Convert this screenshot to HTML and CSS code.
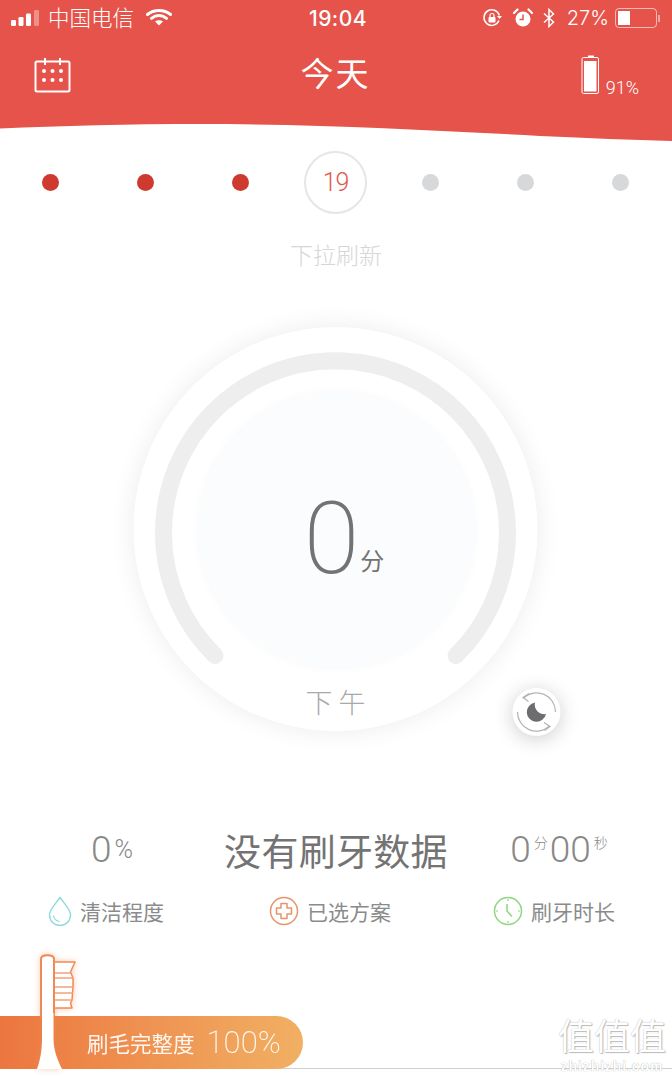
FILE: index.html
```html
<!DOCTYPE html>
<html lang="zh">
<head>
<meta charset="utf-8">
<title>今天</title>
<link rel="stylesheet" href="styles.css">
</head>
<body>
<div class="page">
  <header class="header">
    <svg class="wave" viewBox="0 0 672 142" preserveAspectRatio="none"><path d="M0 128.500C60 126 130 124 200 124C320 124 430 130 540 136C590 138 630 140 672 141V0H0Z" fill="#e5534a"/></svg>
    <div class="status">
      <div class="status-left">
        <svg class="signal" viewBox="0 0 30 16"><rect x="0" y="10" width="5" height="6" rx="1.2" fill="#fff"/><rect x="7.500" y="7" width="5" height="9" rx="1.2" fill="#fff"/><rect x="15" y="3.500" width="5" height="12.500" rx="1.2" fill="#fff"/><rect x="23" y="0" width="5" height="16" rx="1.2" fill="#fff" opacity=".35"/></svg>
        <span class="carrier">中国电信</span>
        <svg class="wifi" viewBox="0 0 26 18"><path d="M1.500 6.500C8 1 18 1 24.500 6.500M5.500 10.300C10 6.700 16 6.700 20.500 10.300" fill="none" stroke="#fff" stroke-width="3" stroke-linecap="round"/><path d="M9 13.500C11.500 11.700 14.500 11.700 17 13.500L13 17.500Z" fill="#fff"/></svg>
      </div>
      <div class="time">19:04</div>
      <div class="status-right">
        <svg class="lock" viewBox="0 0 20 20"><path d="M17 12.500A7.800 7.800 0 1 1 17.300 7.500" fill="none" stroke="#fff" stroke-width="1.500"/><path d="M15 8h5l-2.500 3z" fill="#fff"/><rect x="6.500" y="9" width="7" height="5.500" rx="1" fill="#fff"/><path d="M8 9V7.500a2 2 0 0 1 4 0V9" fill="none" stroke="#fff" stroke-width="1.200"/></svg>
        <svg class="alarm" viewBox="0 0 20 20"><circle cx="10" cy="11" r="7.500" fill="#fff"/><path d="M10 6.500V11.500H6.500" fill="none" stroke="#e5534a" stroke-width="1.500"/><path d="M1 5L4.500 1.500M19 5L15.500 1.500" stroke="#fff" stroke-width="2.200" stroke-linecap="round"/></svg>
        <svg class="bt" viewBox="0 0 12 20"><path d="M1 5.500L10.500 14L6 18.500V1.500L10.500 6L1 14.500" fill="none" stroke="#fff" stroke-width="1.500"/></svg>
        <span class="pct">27%</span>
        <div class="phone-batt"><div class="phone-batt-fill"></div></div><div class="phone-batt-tip"></div>
      </div>
    </div>
    <div class="nav">
      <svg class="cal" viewBox="0 0 38 36"><rect x="1.500" y="4.500" width="34" height="30" rx="1.500" fill="none" stroke="#fff" stroke-width="2"/><path d="M11 1V8M26 1V8" stroke="#fff" stroke-width="2"/><g fill="#fff"><circle cx="10" cy="14" r="2"/><circle cx="18.500" cy="14" r="2"/><circle cx="27" cy="14" r="2"/><circle cx="10" cy="23" r="2"/><circle cx="18.500" cy="23" r="2"/><circle cx="27" cy="23" r="2"/></g></svg>
      <h1 class="title">今天</h1>
      <div class="device">
        <svg class="device-icon" viewBox="0 0 20 40"><path d="M7 1.500h6" stroke="#fff" stroke-width="2"/><rect x="1" y="2.500" width="16.500" height="36" rx="1.500" fill="none" stroke="#fff" stroke-width="1"/><rect x="3" y="6" width="12.500" height="30.500" fill="#fff"/></svg>
        <span class="device-pct">91%</span>
      </div>
    </div>
  </header>

  <div class="dates">
    <span class="dot on"></span>
    <span class="dot on"></span>
    <span class="dot on"></span>
    <span class="today">19</span>
    <span class="dot"></span>
    <span class="dot"></span>
    <span class="dot"></span>
  </div>

  <div class="refresh">下拉刷新</div>

  <section class="dial">
    <svg class="ring" viewBox="0 0 404 404"><path d="M81.500 328.500A172 172 0 1 1 322.500 328.500" fill="none" stroke="#eeeeee" stroke-width="17" stroke-linecap="round"/></svg>
    <div class="core">
      <span class="score">0</span><span class="score-unit">分</span>
    </div>
    <div class="period">下 午</div>
    <div class="mode">
      <svg viewBox="0 0 48 48"><path d="M43 24A19 19 0 0 0 11 10M5 24A19 19 0 0 0 37 38" fill="none" stroke="#b5b5b5" stroke-width="1.300"/><path d="M16.500 5.500L10.500 9.500L16 13.500M31.500 34.500L37.500 38.500L32 42.500" fill="none" stroke="#b5b5b5" stroke-width="1.300"/><path d="M22.500 14.500A9.700 9.700 0 1 0 33.500 26A9.500 9.500 0 0 1 22.500 14.500Z" fill="#6d6d6f"/></svg>
    </div>
  </section>

  <section class="stats">
    <div class="stat-value"><span class="num">0</span><span class="pc">%</span></div>
    <div class="headline">没有刷牙数据</div>
    <div class="stat-value"><span class="num">0</span><sup class="sm">分</sup><span class="num">00</span><sup class="sm">秒</sup></div>
  </section>

  <section class="legend">
    <div class="legend-item">
      <svg class="legend-icon drop" viewBox="0 0 24 30"><path d="M12 1.500C7 8.500 1.500 13.500 1.500 19A10.500 10.500 0 0 0 22.500 19C22.500 13.500 17 8.500 12 1.500Z" fill="none" stroke="#8fd8dc" stroke-width="1.400"/><path d="M5.500 19.500C6 23 8.500 25 11.500 25.500" fill="none" stroke="#8fd8dc" stroke-width="1.200"/></svg>
      <span>清洁程度</span>
    </div>
    <div class="legend-item">
      <svg class="legend-icon" viewBox="0 0 30 30"><circle cx="15" cy="15" r="13.500" fill="none" stroke="#e8946a" stroke-width="1.500"/><path d="M12 7.500H18V12H22.500V18H18V22.500H12V18H7.500V12H12Z" fill="none" stroke="#e8946a" stroke-width="1.500" stroke-linejoin="round"/></svg>
      <span>已选方案</span>
    </div>
    <div class="legend-item">
      <svg class="legend-icon" viewBox="0 0 30 30"><circle cx="15" cy="15" r="13.500" fill="none" stroke="#8ed67f" stroke-width="1.500"/><path d="M14 8V15L19 20.500" fill="none" stroke="#8ed67f" stroke-width="1.500"/><path d="M15 3V5M15 25V27M3 15H5M25 15H27" stroke="#8ed67f" stroke-width="1.200"/></svg>
      <span>刷牙时长</span>
    </div>
  </section>

  <footer class="footer">
    <div class="wear">
      <span class="wear-label">刷毛完整度</span>
      <span class="wear-value">100%</span>
    </div>
    <svg class="brush" viewBox="0 0 44 116">
      <path d="M20 9H41L36.500 19L39 25V34L38.500 40L38 47L36.500 50L38 55H20Z" fill="#fff" stroke="#ef8a55" stroke-width="1.500" stroke-linejoin="round"/>
      <path d="M20 20H37M20 25H39M20 34H39M20 40H39M20 47H38" stroke="#f2a27a" stroke-width="1.300"/>
      <path d="M7 6C7 1 20 1 20 6V63H7Z" fill="#fff" stroke="#ef8a55" stroke-width="2"/>
      <path d="M8 60H19.500V85C19.500 98 24 108 28 116H3C6 108 8 98 8 85Z" fill="#fff"/>
    </svg>
    <div class="watermark">
      <div class="wm-big">值值值</div>
      <div class="wm-small">zhizhizhi.com</div>
    </div>
  </footer>
</div>
</body>
</html>
```
FILE: styles.css
```css
* { box-sizing: border-box; }
html, body { margin: 0; padding: 0; background: #fff; }
body { font-family: "Noto Sans CJK SC", "Liberation Sans", sans-serif; }
.page { position: relative; width: 672px; height: 1079px; overflow: hidden; background: #fff; }

.header { position: relative; height: 142px; color: #fff; }
.wave { position: absolute; inset: 0; width: 100%; height: 100%; }
.status { position: relative; height: 36px; display: grid; grid-template-columns: 1fr auto 1fr; align-items: center; padding: 0 12px 0 11px; }
.status-left, .status-right { display: flex; align-items: center; }
.status-right { justify-content: flex-end; }
.signal { width: 30px; height: 16px; }
.carrier { font-size: 21.5px; margin: -3px 0 0 7px; line-height: 36px; font-weight: 300; }
.wifi { width: 26px; height: 18px; margin: -2px 0 0 12px; }
.time { font-family: Inter, "Liberation Sans", sans-serif; font-size: 21px; font-weight: 500; letter-spacing: .5px; padding: 1px 0 0 5px; }
.lock { width: 20px; height: 20px; }
.alarm { width: 20px; height: 20px; margin-left: 11px; }
.bt { width: 12px; height: 20px; margin-left: 10px; }
.pct { font-family: Inter, "Liberation Sans", sans-serif; font-size: 20px; font-weight: 300; margin-left: 12px; }
.phone-batt { width: 42px; height: 20px; margin-left: 6px; border: 1px solid rgba(255,255,255,.6); border-radius: 4px; padding: 2px; }
.phone-batt-fill { width: 12px; height: 100%; background: #fff; }
.phone-batt-tip { width: 2px; height: 7px; background: rgba(255,255,255,.5); margin-left: 1px; }

.nav { position: relative; display: grid; grid-template-columns: 1fr auto 1fr; align-items: center; padding: 0 33px 0 34px; height: 76px; margin-top: 1px; }
.cal { width: 38px; height: 36px; }
.title { margin: 0 2px 6px 0; font-size: 33px; font-weight: 400; line-height: 70px; letter-spacing: 2px; }
.device { justify-self: end; display: flex; align-items: flex-end; gap: 5px; }
.device-icon { width: 20px; height: 40px; }
.device-pct { font-family: Roboto, "Liberation Sans", sans-serif; font-weight: 300; font-size: 18px; line-height: 20px; margin-bottom: -3px; }

.dates { display: grid; grid-template-columns: repeat(7, 95px); justify-items: center; align-items: center; margin-top: 9px; padding: 0 3px; height: 63px; }
.dot { width: 17px; height: 17px; border-radius: 50%; background: #d7d8d9; }
.dot.on { background: #cf3a30; }
.today { width: 63px; height: 63px; border-radius: 50%; border: 2px solid #e6e6e6; display: flex; align-items: center; justify-content: center; font-family: Roboto, "Liberation Sans", sans-serif; font-weight: 300; font-size: 25px; letter-spacing: -1px; color: #e0584e; }

.refresh { text-align: center; font-size: 23px; font-weight: 300; line-height: 32px; color: #d6d6d6; margin-top: 24px; }

.dial { position: relative; width: 404px; height: 404px; margin: 57px auto 0; border-radius: 50%; background: #fff; box-shadow: 0 0 26px rgba(0,0,0,.08); transform: translateX(-.5px); }
.ring { position: absolute; inset: 0; width: 100%; height: 100%; }
.core { position: absolute; left: 65px; top: 65px; width: 276px; height: 276px; border-radius: 50%; background: #fbfcfd; box-shadow: 0 0 10px rgba(0,0,0,.035); display: flex; align-items: center; justify-content: center; color: #737373; }
.score { font-family: Roboto, "Liberation Sans", sans-serif; font-weight: 200; font-size: 101px; line-height: 100px; margin: 17px 0 0 15px; }
.score-unit { font-size: 24px; align-self: flex-end; margin: 0 0 93px 1px; line-height: 30px; }
.period { position: absolute; left: 0; right: 0; top: 357px; text-align: center; font-size: 27px; line-height: 36px; color: #a9a9a9; font-weight: 300; }
.mode { position: absolute; left: 379px; top: 361px; width: 48px; height: 48px; border-radius: 50%; background: #fff; box-shadow: 0 3px 20px rgba(0,0,0,.2); }
.mode svg { display: block; width: 48px; height: 48px; }

.stats { display: grid; grid-template-columns: 224px 224px 224px; align-items: center; margin-top: 95px; height: 48px; color: #888; }
.stat-value { text-align: center; font-family: Roboto, "Liberation Sans", sans-serif; font-weight: 300; }
.num { font-size: 37px; line-height: 48px; }
.pc { font-size: 25px; margin-left: 3px; vertical-align: 4px; }
.sm { font-size: 14px; line-height: 0; vertical-align: 14px; margin: 0 2px 0 3px; font-family: "Noto Sans CJK SC", sans-serif; }
.headline { text-align: center; font-size: 37px; line-height: 48px; white-space: nowrap; color: #737373; letter-spacing: .3px; }

.legend { display: grid; grid-template-columns: 224px 224px 224px; align-items: center; margin-top: 22px; height: 30px; }
.legend-item { display: flex; align-items: center; justify-content: center; gap: 8px; padding-right: 12px; font-size: 21px; color: #8b8b8b; }
.legend-icon { width: 30px; height: 30px; }
.drop { width: 24px; }

.footer { position: relative; margin-top: 24px; height: 129px; flex: none; }
.footer::after { content: ""; position: absolute; left: 0; right: 0; bottom: 10px; height: 1px; background: #cfcfcf; }
.wear { position: absolute; left: 0; bottom: 10px; width: 303px; height: 53px; display: flex; align-items: center; padding-left: 87px; gap: 12px; color: #fff; background: linear-gradient(90deg, #ec763f, #f1b064); border-radius: 0 27px 27px 0; z-index: 1; }
.wear-label { font-size: 21.5px; opacity: .92; }
.wear-value { font-family: Roboto, "Liberation Sans", sans-serif; font-size: 31px; font-weight: 200; opacity: .9; }
.brush { position: absolute; left: 34px; bottom: 10px; width: 44px; height: 116px; z-index: 2; filter: drop-shadow(0 0 3px rgba(240,140,90,.45)); }
.watermark { position: absolute; right: 5px; bottom: 5px; width: 110px; color: #fff; text-align: center; z-index: 3; }
.wm-big { font-size: 36px; line-height: 38px; margin-bottom: 5px; text-shadow: 0 0 1px #aaa, 1px 1px 1px #bbb; white-space: nowrap; }
.wm-small { font-family: "Liberation Sans", sans-serif; font-size: 14px; line-height: 16px; font-weight: 700; letter-spacing: .9px; text-shadow: 0 0 1px #999; white-space: nowrap; }
```
